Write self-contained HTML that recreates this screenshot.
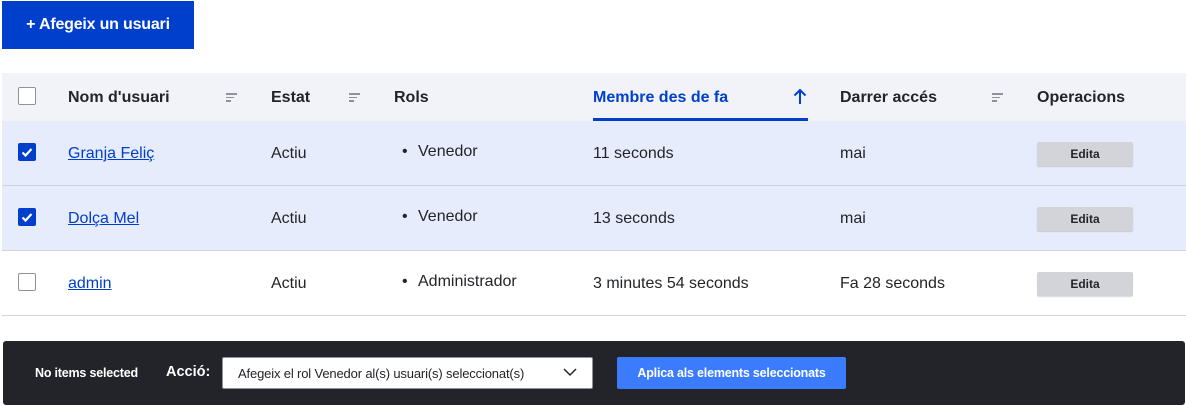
<!DOCTYPE html>
<html><head><style>
*{margin:0;padding:0;box-sizing:border-box}
body{width:1186px;height:406px;background:#fff;font-family:"Liberation Sans",sans-serif;color:#232429;position:relative;overflow:hidden;font-size:16px}
.a{position:absolute}
.btn{left:2px;top:1px;width:192px;height:48px;background:#003ecc;color:#fff;font-weight:bold;font-size:16px;line-height:48px;text-align:center;letter-spacing:-0.2px}
.hdr{left:2px;top:73px;width:1184px;height:48px;background:#f2f3f8}
.row{left:2px;width:1184px;height:65px;border-bottom:1px solid #d3d4d9}
.sel{background:#e6ecfc}
.th{font-weight:bold;top:89px}
.cb{width:18px;height:18px;border:1px solid #8e929c;border-radius:2px;background:#fff}
.cbc{width:18px;height:18px;background:#003ecc;border-radius:2px}
.lnk{color:#003ecc;text-decoration:underline}
.ed{width:96px;height:24px;background:#d3d4d9;font-size:12px;font-weight:bold;text-align:center;line-height:24px;border-radius:2px;box-shadow:0 1px 1px rgba(0,0,0,.15)}
.sort{width:12px}
.sort i{display:block;height:1.5px;background:#8e929c;margin-bottom:2px}
.li::before{content:"•";position:absolute;left:-16px}
</style></head><body>
<div class="a btn">+ Afegeix un usuari</div>
<div class="a hdr"></div>
<div class="a cb" style="left:18px;top:87px"></div>
<div class="a th" style="left:68px">Nom d'usuari</div>
<div class="a sort" style="left:226px;top:93px"><i style="width:11px"></i><i style="width:8px"></i><i style="width:5px"></i></div>
<div class="a th" style="left:271px">Estat</div>
<div class="a sort" style="left:349px;top:93px"><i style="width:11px"></i><i style="width:8px"></i><i style="width:5px"></i></div>
<div class="a th" style="left:394px">Rols</div>
<div class="a th" style="left:593px;color:#003ecc">Membre des de fa</div>
<svg class="a" style="left:793px;top:88px" width="14" height="17"><path d="M7 16V2M1.5 7.5L7 2l5.5 5.5" stroke="#003ecc" stroke-width="2" fill="none"/></svg>
<div class="a" style="left:593px;top:118px;width:215px;height:3px;background:#003ecc"></div>
<div class="a th" style="left:840px">Darrer accés</div>
<div class="a sort" style="left:992px;top:93px"><i style="width:11px"></i><i style="width:8px"></i><i style="width:5px"></i></div>
<div class="a th" style="left:1037px">Operacions</div>

<div class="a row sel" style="top:121px"></div>
<div class="a row sel" style="top:186px"></div>
<div class="a row" style="top:251px"></div>

<div class="a cbc" style="left:18px;top:143px"><svg width="18" height="18"><path d="M4.5 9.5l3 3 6-6.5" stroke="#fff" stroke-width="2.2" fill="none"/></svg></div>
<div class="a lnk" style="left:68px;top:145px">Granja Feliç</div>
<div class="a" style="left:271px;top:145px">Actiu</div>
<div class="a li" style="left:418px;top:143px">Venedor</div>
<div class="a" style="left:593px;top:145px">11 seconds</div>
<div class="a" style="left:840px;top:145px">mai</div>
<div class="a ed" style="left:1037px;top:142px">Edita</div>

<div class="a cbc" style="left:18px;top:208px"><svg width="18" height="18"><path d="M4.5 9.5l3 3 6-6.5" stroke="#fff" stroke-width="2.2" fill="none"/></svg></div>
<div class="a lnk" style="left:68px;top:210px">Dolça Mel</div>
<div class="a" style="left:271px;top:210px">Actiu</div>
<div class="a li" style="left:418px;top:208px">Venedor</div>
<div class="a" style="left:593px;top:210px">13 seconds</div>
<div class="a" style="left:840px;top:210px">mai</div>
<div class="a ed" style="left:1037px;top:207px">Edita</div>

<div class="a cb" style="left:18px;top:273px"></div>
<div class="a lnk" style="left:68px;top:275px">admin</div>
<div class="a" style="left:271px;top:275px">Actiu</div>
<div class="a li" style="left:418px;top:273px">Administrador</div>
<div class="a" style="left:593px;top:275px">3 minutes 54 seconds</div>
<div class="a" style="left:840px;top:275px">Fa 28 seconds</div>
<div class="a ed" style="left:1037px;top:272px">Edita</div>

<div class="a" style="left:3px;top:341px;width:1182px;height:64px;background:#232429;border-radius:3px"></div>
<div class="a" style="left:35px;top:366px;color:#fff;font-size:12.5px;font-weight:bold;letter-spacing:-0.2px">No items selected</div>
<div class="a" style="left:166px;top:364px;color:#fff;font-size:14.5px;font-weight:bold">Acció:</div>
<div class="a" style="left:222px;top:357px;width:371px;height:32px;background:#fff;border:1px solid #8e929c;border-radius:2px;font-size:13px;line-height:31px;padding-left:15px;letter-spacing:-0.15px">Afegeix el rol Venedor al(s) usuari(s) seleccionat(s)</div>
<svg class="a" style="left:563px;top:368px" width="14" height="9"><path d="M1 1l6 6 6-6" stroke="#232429" stroke-width="1.5" fill="none"/></svg>
<div class="a" style="left:617px;top:357px;width:229px;height:32px;background:#3b7cff;color:#fff;font-size:12.5px;font-weight:bold;text-align:center;line-height:32px;border-radius:2px;letter-spacing:-0.2px">Aplica als elements seleccionats</div>
</body></html>
